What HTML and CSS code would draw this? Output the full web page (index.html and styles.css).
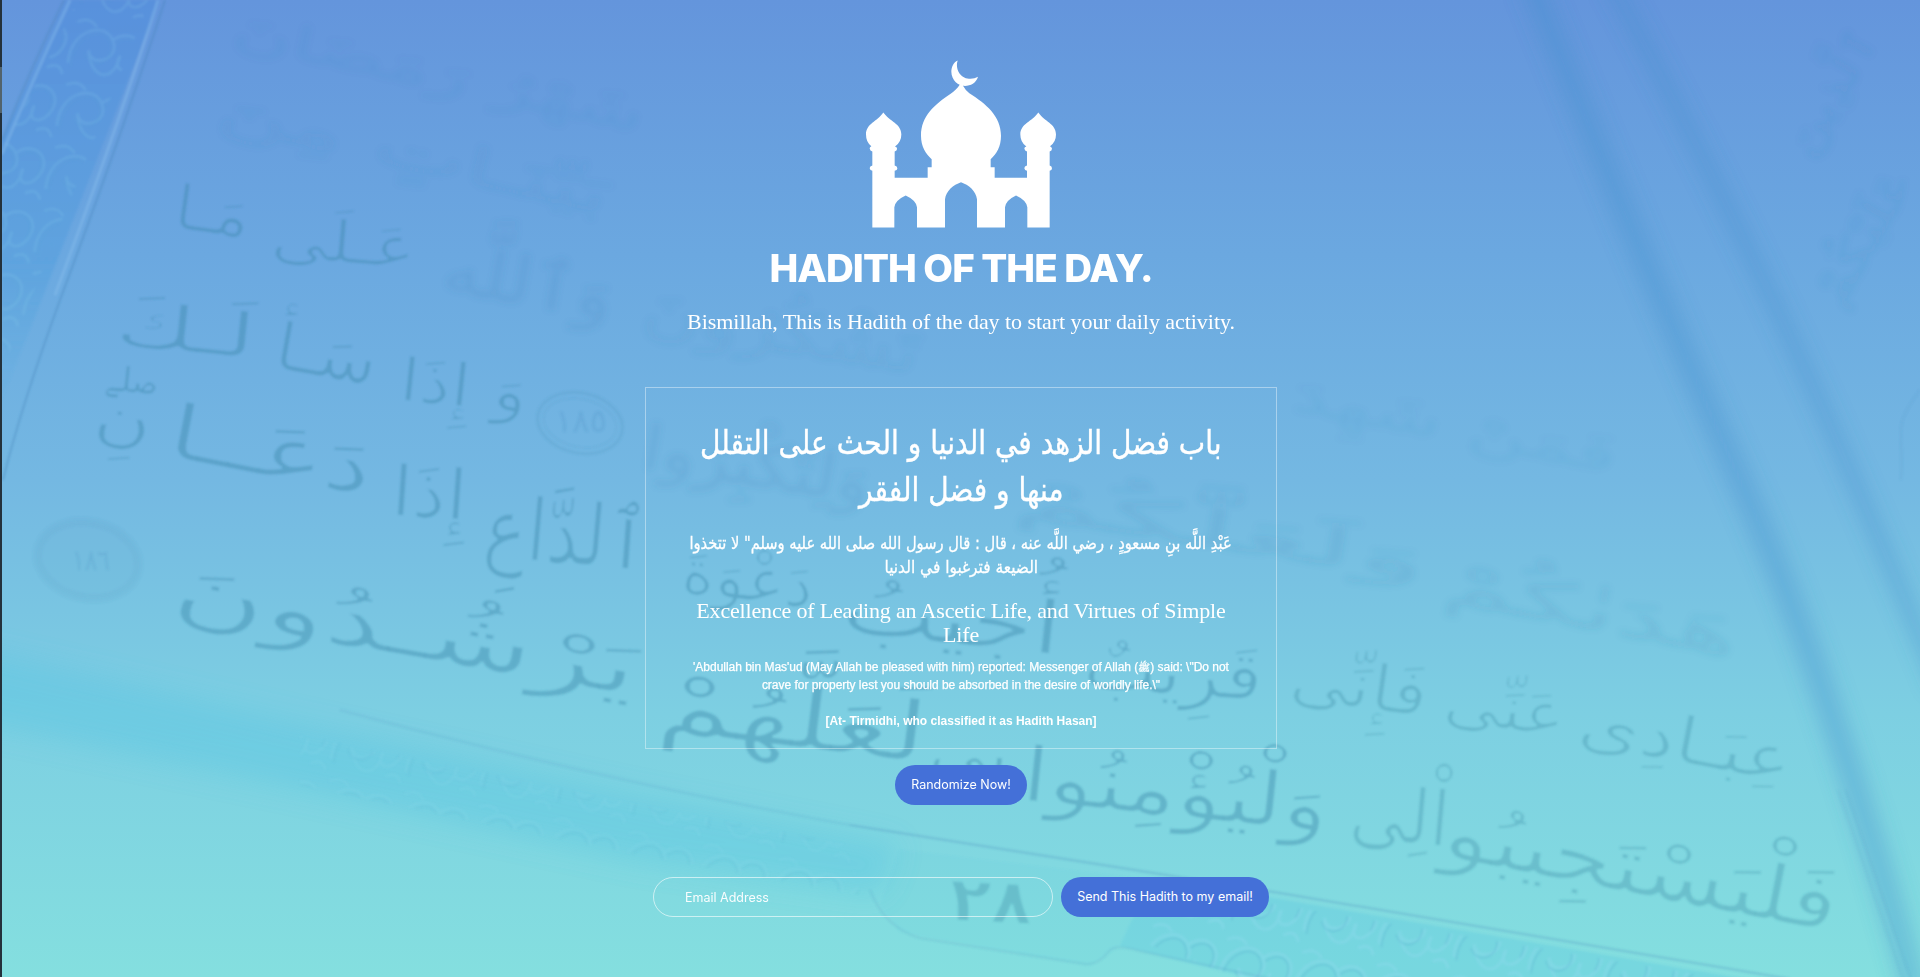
FILE: index.html
```
<!DOCTYPE html>
<html lang="en">
<head>
<meta charset="utf-8">
<title>Hadith of the Day</title>
<link rel="stylesheet" href="styles.css">
</head>
<body>
<svg class="backdrop" viewBox="0 0 1920 977" aria-hidden="true">
  <defs>
    <filter id="b1"><feGaussianBlur stdDeviation="1"/></filter>
    <filter id="pen"><feMorphology operator="erode" radius="1"/><feGaussianBlur stdDeviation=".9"/></filter>
    <filter id="b3"><feGaussianBlur stdDeviation="3"/></filter>
    <filter id="b9" x="-30%" width="160%"><feGaussianBlur stdDeviation="9"/></filter>
    <filter id="b14" x="-30%" y="-30%" width="160%" height="160%"><feGaussianBlur stdDeviation="14"/></filter>
    <pattern id="vine" width="76" height="64" patternUnits="userSpaceOnUse" patternTransform="rotate(10)">
      <path d="M2 50C-2 18 30 2 42 20S24 52 20 34M42 20C58 4 78 18 70 36S46 50 52 34M20 34C26 62 50 64 52 34M4 8Q16 0 24 10M58 58Q70 50 74 62" fill="none" stroke="#8fd9ee" stroke-opacity=".4" stroke-width="2.5"/>
      <path d="M5 53C2 22 31 6 40 23S27 56 17 38M45 23C60 8 75 21 67 39" fill="none" stroke="#4d9fc8" stroke-opacity=".35" stroke-width="1.3"/>
    </pattern>
    <linearGradient id="fade" x1="0" y1="0" x2="0" y2="1">
      <stop offset="0" stop-color="#4488dc" stop-opacity=".36"/>
      <stop offset=".65" stop-color="#4498dc" stop-opacity=".32"/>
      <stop offset="1" stop-color="#4aa8dc" stop-opacity=".05"/>
    </linearGradient>
  </defs>
  <g filter="url(#b1)">
    <path fill="url(#fade)" d="M66 0H160L2 400V140Z"/>
    <path fill="url(#vine)" opacity=".4" d="M78 0H150L2 370V150Z"/>
    <path class="rule" d="M64 0Q30 70 2 140M165 0Q120 140 60 300Q20 410 3 480"/>
    <path class="rule light" d="M70 0Q36 72 2 154M158 0Q114 138 55 295"/>
  </g>
  <path class="band low" filter="url(#b14)" opacity=".8" d="M-40 645L300 722L640 795L900 845L880 895L640 862L300 790L-40 720Z"/>
  <g filter="url(#b1)">
    <path class="band low" d="M1150 880L1280 899L1780 985H1280L1120 946Z" opacity=".6"/>
    <path class="band low" d="M900 850L1150 880L1120 946L1090 966L900 932L880 905Z" opacity=".2"/>
    <path fill="url(#vine)" opacity=".45" d="M300 735L640 805L850 845L860 895L640 855L300 785Z"/>
    <path fill="url(#vine)" d="M1160 888L1280 905L1760 985H1260L1150 945Z"/>
    <path class="rule" opacity=".35" d="M340 710Q600 780 850 825"/>
    <path class="rule" opacity=".7" d="M850 825L1280 893L1790 979"/>
    <path class="rule" opacity=".4" d="M870 890Q885 928 920 938L1085 964Q1098 966 1110 950Q1118 944 1140 951L1300 985"/>
  </g>
  <g filter="url(#b9)" fill="none" stroke="#458fcd" stroke-opacity=".34">
    <path stroke-width="27" d="M1530 -20Q1650 280 1740 480T1915 990"/>
    <path stroke-width="18" d="M1610 -20Q1750 240 1845 460T1940 690"/>
  </g>
  <g filter="url(#b1)"><path class="rule" d="M1838 790L1905 985M1846 790L1913 985M1920 390C1890 430 1905 430 1901 480" opacity=".3"/></g>

  <g class="script" filter="url(#pen)">
    <text transform="translate(172 228) rotate(8)" font-size="62" textLength="76" lengthAdjust="spacingAndGlyphs">مَـا</text>
    <text transform="translate(270 256) rotate(5)" font-size="58" textLength="145" lengthAdjust="spacingAndGlyphs">عَـلَى</text>
    <text transform="translate(114 344) rotate(6)" font-size="62" textLength="140" lengthAdjust="spacingAndGlyphs">لَـكَ</text>
    <text transform="translate(272 368) rotate(10)" font-size="66" textLength="103" lengthAdjust="spacingAndGlyphs">سَـأ</text>
    <text transform="translate(398 400) rotate(6)" font-size="60" textLength="128" lengthAdjust="spacingAndGlyphs">وَ إِذَا</text>
    <text transform="translate(92 437) rotate(6)" font-size="62" textLength="58" lengthAdjust="spacingAndGlyphs">نِ</text>
    <text transform="translate(104 390) rotate(6)" font-size="36" font-weight="700" textLength="54" lengthAdjust="spacingAndGlyphs">صلے</text>
    <text transform="translate(165 456) rotate(11)" font-size="76" textLength="206" lengthAdjust="spacingAndGlyphs">دَعَــا</text>
    <text transform="translate(390 515) rotate(4)" font-size="70" textLength="76" lengthAdjust="spacingAndGlyphs">إِذَا</text>
    <text transform="translate(482 556) rotate(5)" font-size="86" textLength="164" lengthAdjust="spacingAndGlyphs">ٱلدَّاعِ</text>
    <text transform="translate(680 592) rotate(7)" font-size="62" textLength="132" lengthAdjust="spacingAndGlyphs">دَعْوَةَ</text>
    <text transform="translate(840 632) rotate(6)" font-size="74" textLength="220" lengthAdjust="spacingAndGlyphs">أُجِيبُ</text>
    <text transform="translate(1082 688) rotate(4)" font-size="66" textLength="180" lengthAdjust="spacingAndGlyphs">قَرِيبٌ</text>
    <text transform="translate(170 614) rotate(10)" font-size="78" textLength="470" lengthAdjust="spacingAndGlyphs">يَرْشُـدُونَ</text>
    <text transform="translate(656 730) rotate(7)" font-size="84" textLength="270" lengthAdjust="spacingAndGlyphs">لَعَلَّهُمْ</text>
    <text transform="translate(928 768) rotate(5)" font-size="58" textLength="80" lengthAdjust="spacingAndGlyphs">بِى</text>
    <text transform="translate(1020 800) rotate(6)" font-size="76" textLength="308" lengthAdjust="spacingAndGlyphs">وَلْيُؤْمِنُوا</text>
  </g>
  <g class="script mid" filter="url(#pen)">
    <text transform="translate(1288 698) rotate(8)" font-size="64" textLength="138" lengthAdjust="spacingAndGlyphs">فَإِنِّى</text>
    <text transform="translate(1442 720) rotate(8)" font-size="60" textLength="122" lengthAdjust="spacingAndGlyphs">عَنِّى</text>
    <text transform="translate(1576 742) rotate(11)" font-size="64" textLength="216" lengthAdjust="spacingAndGlyphs">عِبَـادِى</text>
    <text transform="translate(1348 838) rotate(5)" font-size="76" textLength="100" lengthAdjust="spacingAndGlyphs">اْلِى</text>
    <text transform="translate(1440 856) rotate(11)" font-size="78" textLength="400" lengthAdjust="spacingAndGlyphs">فَلْيَسْتَجِيبُو</text>
    <text transform="translate(948 920) rotate(3)" font-size="62" font-weight="700" textLength="84" lengthAdjust="spacingAndGlyphs">٢٨</text>
  </g>
  <g class="script faint" filter="url(#b3)">
    <text transform="translate(440 290) rotate(10)" font-size="66" textLength="172" lengthAdjust="spacingAndGlyphs">وَٱللَّه</text>
    <text transform="translate(640 330) rotate(9)" font-size="60" textLength="280" lengthAdjust="spacingAndGlyphs" opacity=".5">تَشْكُرُونَ</text>
    <text transform="translate(215 125) rotate(13)" font-size="52" textLength="400" lengthAdjust="spacingAndGlyphs" opacity=".6">بَيِّنَـاتٍ مِنَ</text>
    <text transform="translate(230 45) rotate(12)" font-size="46" textLength="420" lengthAdjust="spacingAndGlyphs" opacity=".4">شَهْرُ رَمَضَانَ</text>
    <text transform="translate(640 468) rotate(9)" font-size="62" textLength="230" lengthAdjust="spacingAndGlyphs">وَلِتُكْبِرُوا</text>
    <text transform="translate(1010 515) rotate(9)" font-size="52" textLength="420" lengthAdjust="spacingAndGlyphs" opacity=".8">وَلَعَلَّكُمْ</text>
    <text transform="translate(1440 600) rotate(11)" font-size="56" textLength="300" lengthAdjust="spacingAndGlyphs" opacity=".8">هَدَىٰكُمْ</text>
    <text transform="translate(1290 410) rotate(11)" font-size="44" textLength="330" lengthAdjust="spacingAndGlyphs" opacity=".4">فَمَنْ شَهِدَ</text>
    <text transform="translate(1840 310) rotate(-60)" font-size="46" textLength="150" lengthAdjust="spacingAndGlyphs" opacity=".7">عَلَيْكُمْ</text>
    <text transform="translate(1810 160) rotate(-60)" font-size="42" textLength="140" lengthAdjust="spacingAndGlyphs" opacity=".7">ٱلَّذِينَ</text>
  </g>
  <g filter="url(#b1)" fill="none" stroke="#478fb8" stroke-opacity=".18">
    <ellipse cx="580" cy="423" rx="43" ry="30" stroke-width="3" transform="rotate(12 580 423)"/>
    <ellipse cx="580" cy="423" rx="37" ry="24" stroke-width="1" transform="rotate(12 580 423)"/>
    <ellipse cx="88" cy="560" rx="51" ry="38" stroke-width="9" stroke-opacity=".08" fill="#478fb8" fill-opacity=".05" transform="rotate(12 88 560)"/>
  </g>
  <g class="script faint" filter="url(#b1)">
    <text x="555" y="432" font-size="32" textLength="52" lengthAdjust="spacingAndGlyphs">١٨٥</text>
    <text x="72" y="570" font-size="28" textLength="38" lengthAdjust="spacingAndGlyphs">١٨٦</text>
  </g>
</svg>
<div class="edge"><span class="thumb"></span></div>

<main class="page">
  <svg class="mosque" viewBox="0 0 192 168" aria-hidden="true">
    <g transform="translate(-25 -19.5) scale(.33333)" fill="#fff">
      <path d="M353 60C336 68 329 92 338 112C343 123 351 130 359 133C353 144 343 152 332 160C285 192 243 226 243 286C243 318 257 341 275 356V380H263V412H164V391Q173 390 172 383Q172 377 164 375V333Q172 331 171 324Q171 319 165 318Q184 305 184 282C184 249 149 243 130 216C112 243 78 249 78 282Q78 305 94 317Q89 319 89 324Q90 331 97 333V375Q89 377 89 383Q90 390 97 391V561H163V500Q166 479 197 465Q228 479 231 500V561H315V476C318 451 340 433 363 425C386 433 408 451 411 476V561H495V500Q498 479 528 465Q559 479 562 500V561H629V391Q636 390 636 383Q636 377 629 375V333Q636 331 636 324Q635 319 630 317Q648 305 648 282C648 249 613 243 595 216C577 243 541 249 541 282Q541 305 559 318Q553 319 553 324Q554 331 561 333V375Q553 377 553 383Q554 390 561 391V412H464V380H452V356C470 341 483 318 483 286C483 226 438 190 388 158Q375 148 369 136C388 138 408 130 414 109C397 119 371 117 358 98C350 86 349 71 353 60Z"/>
    </g>
  </svg>
  <h1 class="title">HADITH OF THE DAY.</h1>
  <p class="subtitle">Bismillah, This is Hadith of the day to start your daily activity.</p>

  <section class="card">
    <h2 class="ar-title" dir="rtl" lang="ar"><span>باب فضل الزهد في الدنيا و الحث على التقلل</span><br><span>منها و فضل الفقر</span></h2>
    <p class="ar-text" dir="rtl" lang="ar"><span>عَبْدِ اللَّه بنِ مسعودٍ ، رضي اللَّه عنه ، قال : قال رسول الله صلى الله عليه وسلم" لا تتخذوا</span><br><span>الضيعة فترغبوا في الدنيا</span></p>
    <h3 class="en-title">Excellence of Leading an Ascetic Life, and Virtues of Simple<br>Life</h3>
    <p class="en-text">'Abdullah bin Mas'ud (May Allah be pleased with him) reported: Messenger of Allah (<span class="saw">ﷺ</span>) said: \"Do not<br>crave for property lest you should be absorbed in the desire of worldly life.\"</p>
    <p class="source">[At- Tirmidhi, who classified it as Hadith Hasan]</p>
  </section>

  <button class="btn random" type="button">Randomize Now!</button>

  <form class="subscribe">
    <input class="email" type="email" placeholder="Email Address" aria-label="Email Address">
    <button class="btn send" type="button">Send This Hadith to my email!</button>
  </form>
</main>
</body>
</html>
```

FILE: styles.css
```
* { box-sizing: border-box; }

body {
  margin: 0;
  height: 977px;
  overflow: hidden;
  color: #fff;
  font-family: "Liberation Sans", "DejaVu Sans", sans-serif;
  background: linear-gradient(#6495dc 0%, #6ba8e0 26%, #74b8e2 49%, #7dcfe2 73%, #84dfdf 100%);
}

h1, h2, h3, p { margin: 0; font-weight: 400; white-space: nowrap; }

.backdrop { position: absolute; inset: 0; width: 1920px; height: 977px; }
.band.low { fill: #55c4e2; fill-opacity: .45; }
.rule { fill: none; stroke: #4584b8; stroke-opacity: .38; stroke-width: 2; }
.rule.light { stroke: #8cc0ee; stroke-opacity: .4; stroke-width: 3; }
.script { font-family: "DejaVu Sans", sans-serif; fill: #3a84a8; fill-opacity: .4; }
.script.mid { fill: #4090a8; fill-opacity: .36; }
.script.faint { fill: #3f80b4; fill-opacity: .15; }

.edge { position: absolute; left: 0; top: 0; width: 2px; height: 977px; padding-top: 67px; background: #24313b; }
.thumb { display: block; height: 46px; background: #52636c; }

.page {
  position: relative;
  display: flex;
  flex-direction: column;
  align-items: center;
  padding: 60px 0 0 2px;
}

.mosque { width: 192px; height: 168px; }

.title {
  margin-top: 16px;
  font: 800 38.5px/48px Inter, sans-serif;
  letter-spacing: -.95px;
}

.subtitle {
  margin-top: 17px;
  font: 22px/26px "Liberation Serif", serif;
  letter-spacing: -.05px;
}

.card {
  width: 632px;
  height: 362px;
  margin-top: 52px;
  padding-top: 31px;
  border: 1px solid rgba(255, 255, 255, .4);
  text-align: center;
}

.ar-title { font: 33px/47px "DejaVu Sans", sans-serif; }
.ar-text { margin-top: 18px; font: 17.5px/24px "DejaVu Sans", sans-serif; }
.ar-title span, .ar-text span { display: inline-block; margin: 0 -40px; transform: scaleX(.85); }
.ar-text span { transform: scaleX(.838); -webkit-text-stroke: .3px #fff; }
.ar-text span:last-child { transform: scaleX(.88); }
.ar-title span { -webkit-text-stroke: .4px #fff; }
.en-title { margin-top: 20px; font: 22px/24px "Liberation Serif", serif; letter-spacing: -.17px; }
.en-text { margin-top: 11px; font-size: 12px; line-height: 18px; letter-spacing: -.02px; -webkit-text-stroke: .25px #fff; }
.saw { font-size: 10px; line-height: 1; }
.source { margin-top: 18px; font-size: 12px; line-height: 18px; font-weight: 700; }

.btn {
  height: 40px;
  padding: 0;
  border: 0;
  border-radius: 20px;
  background: #4470d8;
  color: #fff;
  font: 400 12.5px/40px Inter, sans-serif;
  white-space: nowrap;
}
.random { width: 132px; margin-top: 16px; }

.subscribe { display: flex; gap: 8px; margin-top: 72px; }
.email {
  width: 400px;
  height: 40px;
  padding: 0 31px;
  border: 1px solid rgba(255, 255, 255, .6);
  border-radius: 20px;
  background: transparent;
  font: 400 12.5px Inter, sans-serif;
}
.email::placeholder { color: #fff; opacity: .95; }
.send { width: 208px; }
```
